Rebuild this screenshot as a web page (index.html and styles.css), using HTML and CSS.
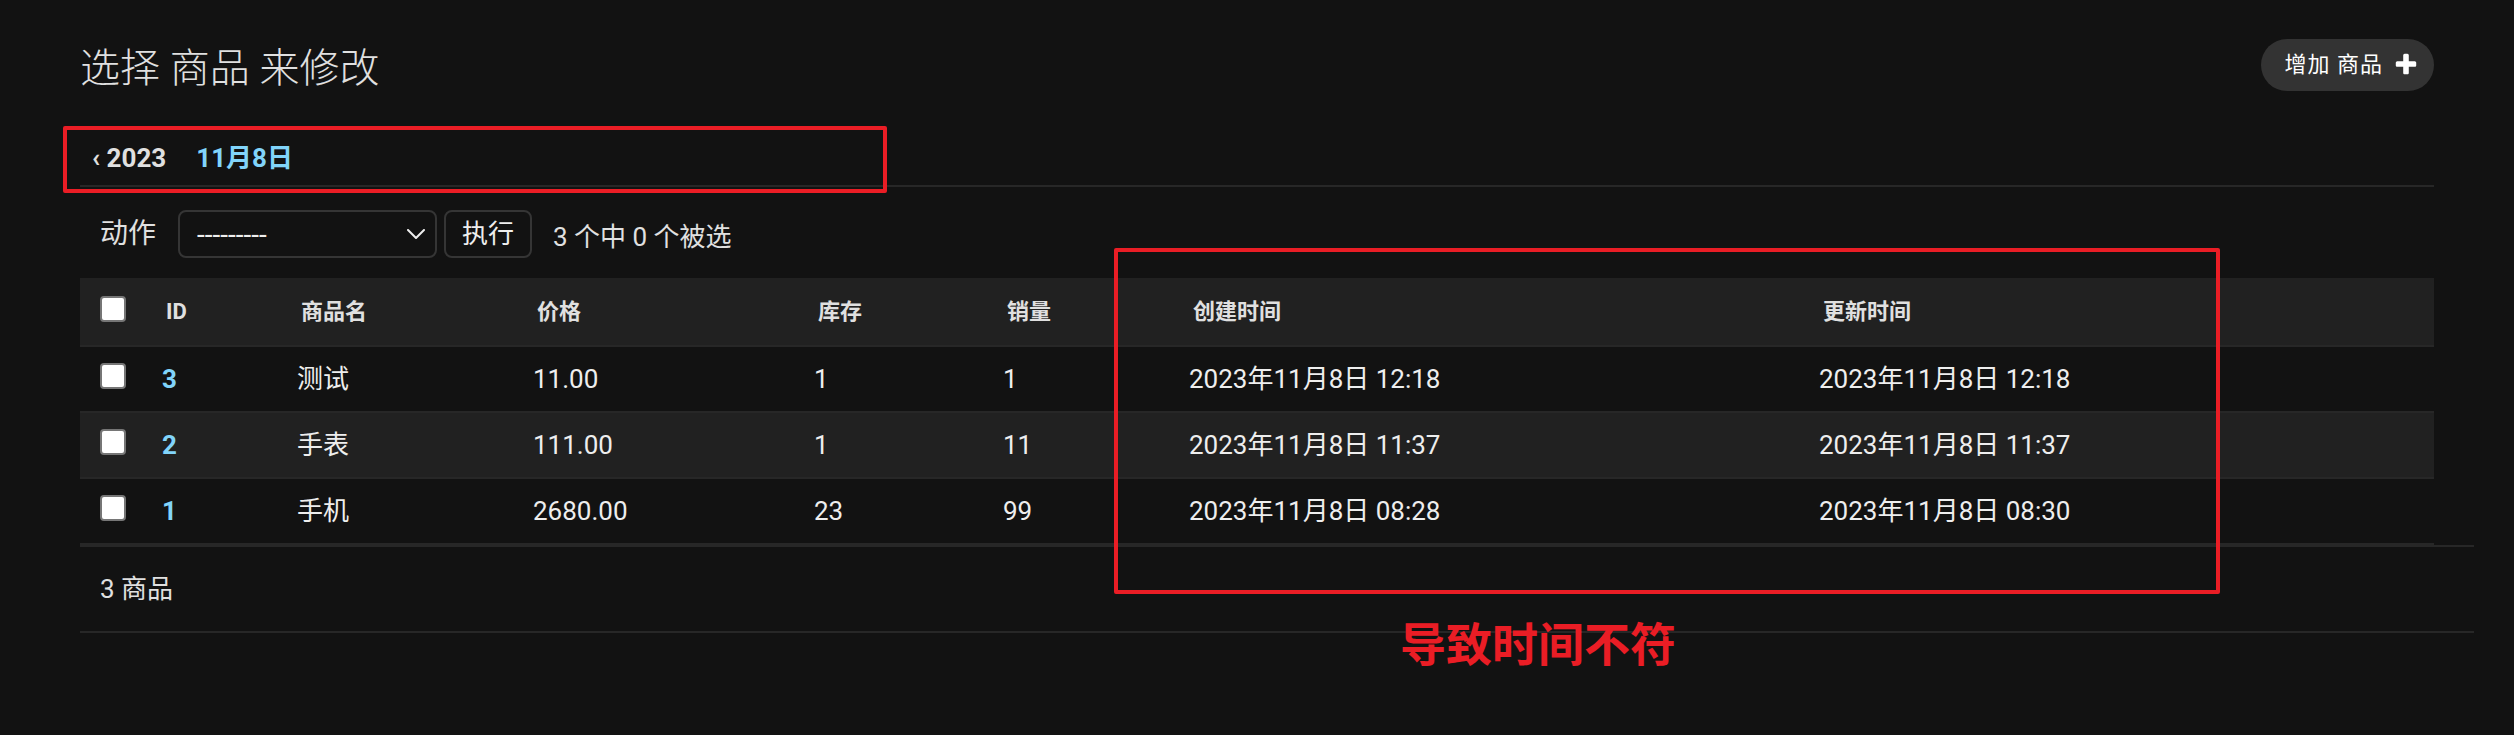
FILE: index.html
```html
<!DOCTYPE html>
<html lang="zh-CN">
<head>
<meta charset="utf-8">
<title>选择 商品 来修改</title>
<link rel="stylesheet" href="styles.css">
</head>
<body>
<div class="page">
  <div class="page-head">
    <h1 class="title">选择 商品 来修改</h1>
    <a class="addlink" href="#">增加 商品<svg class="addlink-icon" viewBox="0 0 1792 1792" aria-hidden="true"><path fill="#ffffff" d="M1600 736v192q0 40-28 68t-68 28h-416v416q0 40-28 68t-68 28h-192q-40 0-68-28t-28-68v-416h-416q-40 0-68-28t-28-68v-192q0-40 28-68t68-28h416v-416q0-40 28-68t68-28h192q40 0 68 28t28 68v416h416q40 0 68 28t28 68z"/></svg></a>
  </div>

  <div class="changelist">
    <nav class="toplinks">
      <ul>
        <li class="date-back"><a href="#">‹ 2023</a></li>
        <li><a href="#" class="date-current">11月8日</a></li>
      </ul>
    </nav>

    <div class="actions">
      <label class="actions-label">动作</label>
      <div class="select">
        <span class="select-value">---------</span>
        <svg class="select-arrow" viewBox="0 0 18 10" aria-hidden="true"><path d="M1 1l8 8 8-8" fill="none" stroke="#eeeeee" stroke-width="2" stroke-linecap="round" stroke-linejoin="round"/></svg>
      </div>
      <button class="button" type="button">执行</button>
      <span class="action-counter">3 个中 0 个被选</span>
    </div>

    <table class="result-list">
      <colgroup>
        <col class="col-check">
        <col class="col-id">
        <col class="col-name">
        <col class="col-price">
        <col class="col-stock">
        <col class="col-sales">
        <col class="col-created">
        <col class="col-updated">
      </colgroup>
      <thead>
        <tr>
          <th class="check-cell"><span class="checkbox"></span></th>
          <th><span class="text">ID</span></th>
          <th><span class="text">商品名</span></th>
          <th><span class="text">价格</span></th>
          <th><span class="text">库存</span></th>
          <th><span class="text">销量</span></th>
          <th><span class="text">创建时间</span></th>
          <th><span class="text">更新时间</span></th>
        </tr>
      </thead>
      <tbody>
        <tr>
          <td class="check-cell"><span class="checkbox"></span></td>
          <th class="field-id"><a href="#">3</a></th>
          <td>测试</td>
          <td>11.00</td>
          <td>1</td>
          <td>1</td>
          <td>2023年11月8日 12:18</td>
          <td>2023年11月8日 12:18</td>
        </tr>
        <tr>
          <td class="check-cell"><span class="checkbox"></span></td>
          <th class="field-id"><a href="#">2</a></th>
          <td>手表</td>
          <td>111.00</td>
          <td>1</td>
          <td>11</td>
          <td>2023年11月8日 11:37</td>
          <td>2023年11月8日 11:37</td>
        </tr>
        <tr>
          <td class="check-cell"><span class="checkbox"></span></td>
          <th class="field-id"><a href="#">1</a></th>
          <td>手机</td>
          <td>2680.00</td>
          <td>23</td>
          <td>99</td>
          <td>2023年11月8日 08:28</td>
          <td>2023年11月8日 08:30</td>
        </tr>
      </tbody>
    </table>

    <p class="paginator">3 商品</p>
  </div>

  <div class="mark mark-date"></div>
  <div class="mark mark-time"></div>
  <div class="mark-note">导致时间不符</div>
</div>
</body>
</html>
```

FILE: styles.css
```css
html, body {
  margin: 0;
  padding: 0;
  background: #121212;
}

body {
  font-family: Roboto, "Noto Sans CJK SC", sans-serif;
  color: #eeeeee;
}

.page {
  position: relative;
  padding: 40px 80px;
}

a {
  text-decoration: none;
}

/* ---------- header ---------- */
.page-head {
  display: flex;
  justify-content: space-between;
  align-items: flex-start;
}

.title {
  margin: 0 0 40px;
  font-size: 40px;
  line-height: 58px;
  font-weight: 300;
  color: #e0e0e0;
}

.addlink {
  display: flex;
  align-items: center;
  gap: 10px;
  margin-top: -1px;
  padding: 6px 15px 6px 24px;
  height: 40px;
  line-height: 40px;
  border-radius: 26px;
  background: #333333;
  color: #ffffff;
  font-size: 22px;
  letter-spacing: 1px;
}

.addlink-icon {
  width: 26px;
  height: 26px;
}

/* ---------- date hierarchy ---------- */
.toplinks {
  border-bottom: 2px solid #272727;
}

.toplinks ul {
  display: flex;
  margin: 0;
  padding: 0 0 7px;
  list-style: none;
}

.toplinks li {
  padding: 6px 12px;
  margin-right: 6px;
  font-size: 26px;
  line-height: 28px;
  font-weight: 700;
}

.date-back a {
  color: #e0e0e0;
}

.date-current {
  color: #81d4fa;
}

/* ---------- actions ---------- */
.actions {
  display: flex;
  align-items: center;
  padding: 23px 20px 20px;
  height: 48px;
  color: #e0e0e0;
}

.actions-label {
  font-size: 28px;
  line-height: 48px;
  margin-right: 22px;
}

.select {
  box-sizing: border-box;
  display: flex;
  align-items: center;
  justify-content: space-between;
  width: 259px;
  height: 48px;
  padding: 0 10px 0 17px;
  border: 2px solid #353535;
  border-radius: 8px;
  background: #121212;
  color: #eeeeee;
  font-size: 28px;
}

.select-arrow {
  width: 18px;
  height: 10px;
}

.button {
  box-sizing: border-box;
  height: 48px;
  margin-left: 7px;
  padding: 0 16px;
  border: 2px solid #353535;
  border-radius: 8px;
  background: #121212;
  color: #eeeeee;
  font-family: Roboto, "Noto Sans CJK SC", sans-serif;
  font-size: 26px;
  line-height: 1;
}

.action-counter {
  margin-left: 21px;
  font-size: 26px;
  color: #e0e0e0;
}

/* ---------- table ---------- */
.result-list {
  width: 100%;
  border-collapse: collapse;
  table-layout: fixed;
}

.col-check { width: 66px; }
.col-id { width: 135px; }
.col-name { width: 236px; }
.col-price { width: 281px; }
.col-stock { width: 189px; }
.col-sales { width: 186px; }
.col-created { width: 630px; }
.col-updated { width: 631px; }

.result-list thead th {
  padding: 0;
  background: #212121;
  border-top: 2px solid #212121;
  border-bottom: 2px solid #272727;
  text-align: left;
  vertical-align: middle;
  color: #e0e0e0;
  font-size: 22px;
  font-weight: 700;
  white-space: nowrap;
}

.result-list thead th .text {
  display: block;
  padding: 16px 20px 17px;
  line-height: 32px;
}

.result-list thead th.check-cell {
  text-align: center;
  vertical-align: top;
  padding-top: 16px;
}

.result-list tbody td,
.result-list tbody th {
  padding: 16px;
  border-bottom: 2px solid #272727;
  vertical-align: top;
  text-align: left;
  font-size: 26px;
  line-height: 32px;
  font-weight: 400;
  color: #eeeeee;
  white-space: nowrap;
}

.result-list tbody tr:nth-child(even) {
  background: #212121;
}

.result-list tbody td.check-cell {
  text-align: center;
  padding-left: 0;
  padding-right: 0;
}

.result-list tbody th.field-id a {
  color: #81d4fa;
  font-weight: 700;
}

.checkbox {
  display: inline-block;
  box-sizing: border-box;
  width: 26px;
  height: 26px;
  border: 2px solid #767676;
  border-radius: 4px;
  background: #ffffff;
  vertical-align: top;
}

/* ---------- paginator ---------- */
.paginator {
  box-sizing: border-box;
  width: calc(100% + 40px);
  margin: 0;
  padding: 20px;
  border-top: 2px solid #272727;
  border-bottom: 2px solid #272727;
  font-size: 26px;
  line-height: 44px;
  color: #e0e0e0;
}

/* ---------- annotations ---------- */
.mark {
  position: absolute;
  box-sizing: border-box;
  border: 4px solid #ea1d25;
  border-radius: 2px;
}

.mark-date {
  left: 63px;
  top: 126px;
  width: 824px;
  height: 67px;
}

.mark-time {
  left: 1114px;
  top: 248px;
  width: 1106px;
  height: 346px;
}

.mark-note {
  position: absolute;
  left: 1400px;
  top: 618px;
  font-size: 46px;
  line-height: 46px;
  font-weight: 700;
  color: #ea1d25;
  font-family: "Noto Sans CJK SC", sans-serif;
}
```
